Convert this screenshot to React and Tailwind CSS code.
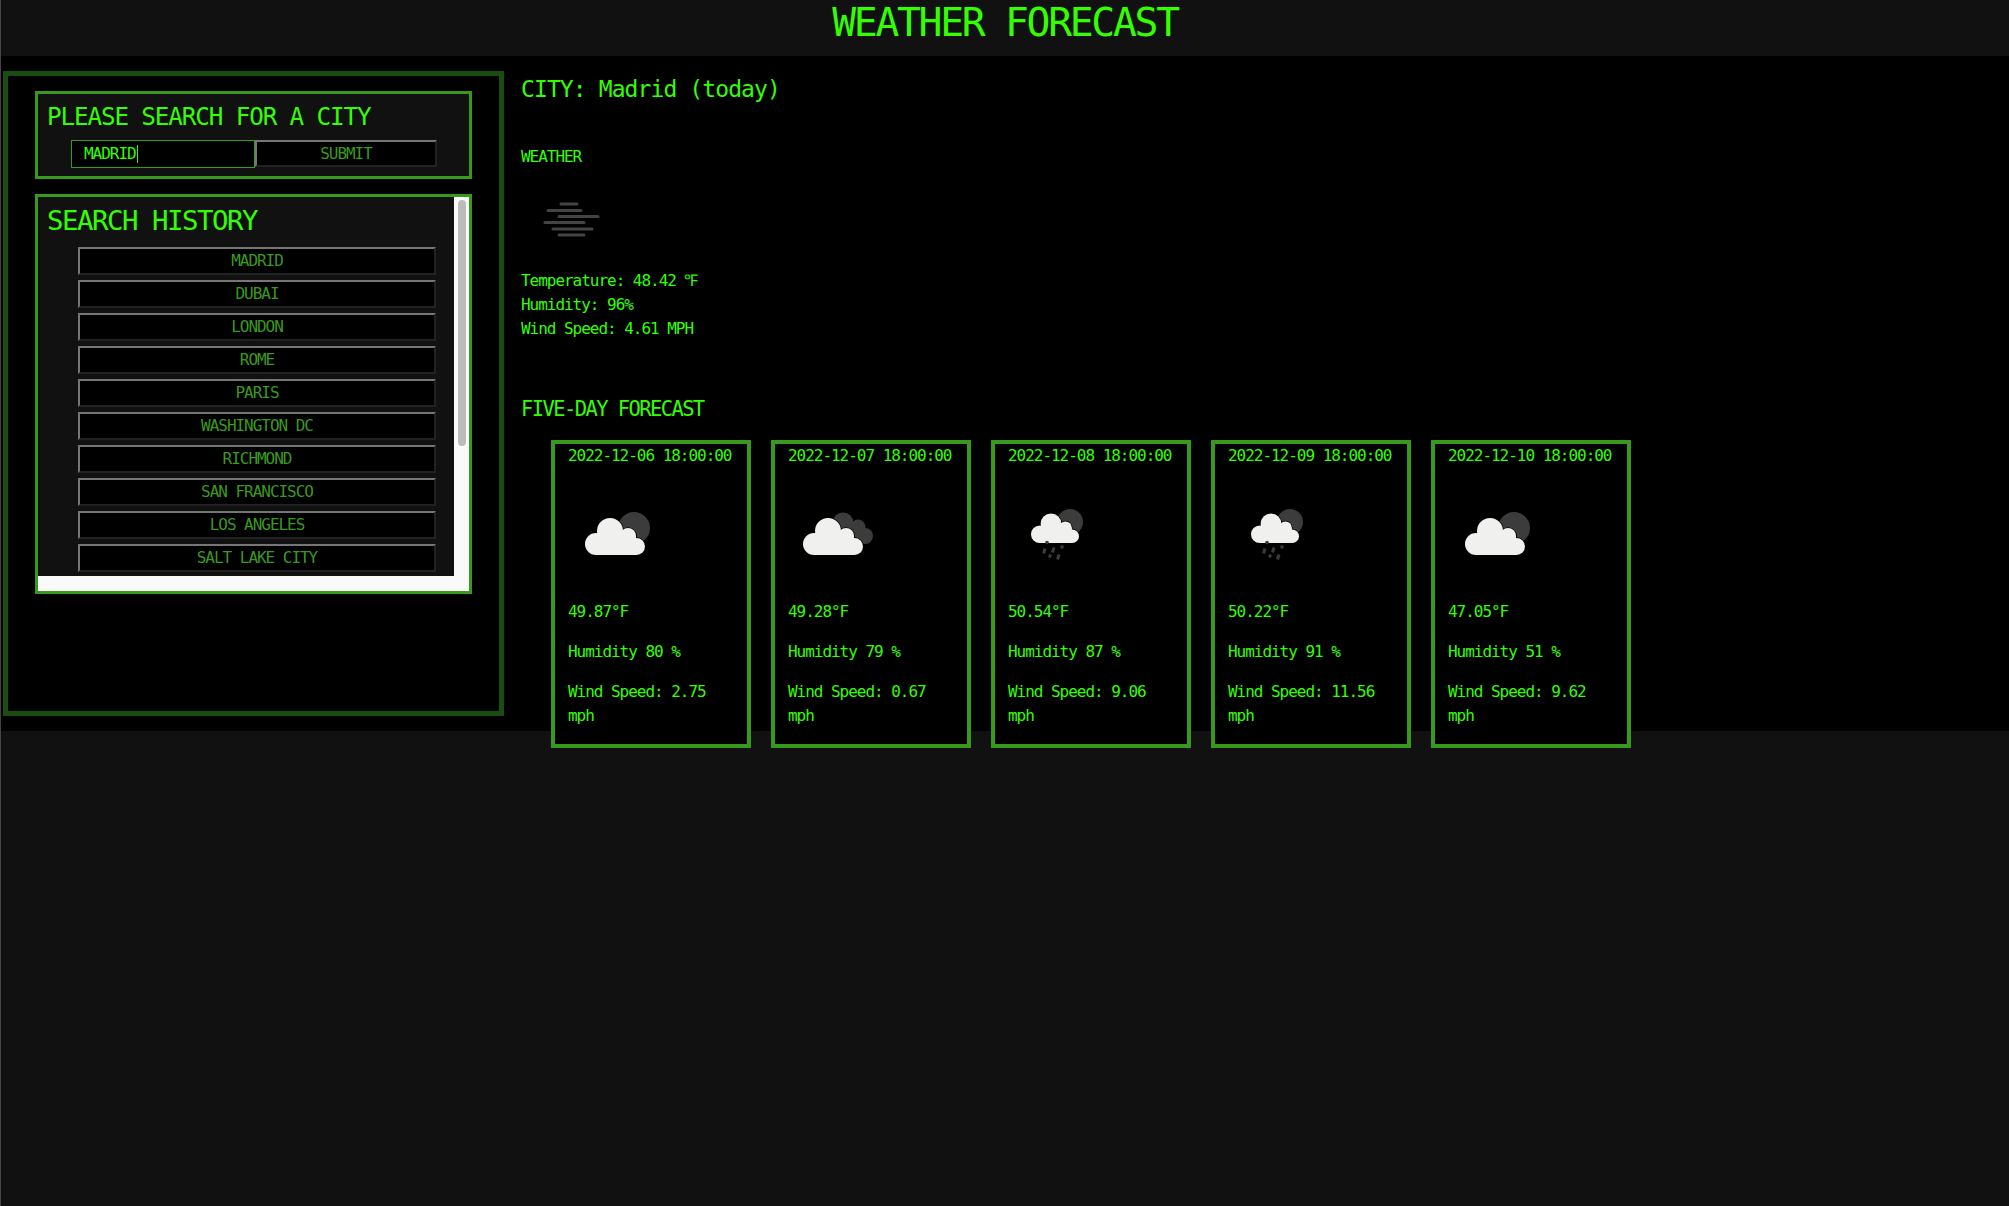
const HISTORY = ['MADRID', 'DUBAI', 'LONDON', 'ROME', 'PARIS', 'WASHINGTON DC', 'RICHMOND', 'SAN FRANCISCO', 'LOS ANGELES', 'SALT LAKE CITY'];

const FORECAST = [
  { date: '2022-12-06 18:00:00', temp: '49.87°F', humidity: '80', wind: '2.75', icon: 'sun' },
  { date: '2022-12-07 18:00:00', temp: '49.28°F', humidity: '79', wind: '0.67', icon: 'clouds' },
  { date: '2022-12-08 18:00:00', temp: '50.54°F', humidity: '87', wind: '9.06', icon: 'rain' },
  { date: '2022-12-09 18:00:00', temp: '50.22°F', humidity: '91', wind: '11.56', icon: 'rain' },
  { date: '2022-12-10 18:00:00', temp: '47.05°F', humidity: '51', wind: '9.62', icon: 'sun' },
];

function CloudShape({ fill, stroke }) {
  const s = stroke ? { stroke, strokeWidth: 1.5 } : {};
  return (
    <g fill={fill} {...s}>
      <circle cx="28" cy="54" r="11" />
      <circle cx="42" cy="41" r="13" />
      <circle cx="60" cy="46" r="8" />
      <circle cx="68.5" cy="56.5" r="8.5" />
      <rect x="28" y="46" width="40" height="19" />
    </g>
  );
}

function Cloud() {
  return (
    <>
      <CloudShape fill="#000" stroke="#000" />
      <CloudShape fill="#f0f0ee" />
    </>
  );
}

function WeatherIcon({ type }) {
  return (
    <svg viewBox="0 0 100 100" className="w-[100px] h-[100px] block">
      {type === 'sun' && (
        <>
          <circle cx="66" cy="38" r="16" fill="#3c3c3c" />
          <Cloud />
        </>
      )}
      {type === 'clouds' && (
        <>
          <g fill="#3c3c3c">
            <circle cx="55" cy="33" r="10.5" />
            <circle cx="70" cy="37" r="7.5" />
            <circle cx="77" cy="46" r="8" />
            <rect x="55" y="33" width="20" height="20" />
          </g>
          <g transform="translate(-2 0)">
            <Cloud />
          </g>
        </>
      )}
      {type === 'rain' && (
        <>
          <circle cx="62" cy="32" r="13" fill="#3c3c3c" />
          <g transform="translate(9.4 1) scale(0.8)">
            <Cloud />
          </g>
          <g stroke="#3c3c3c" strokeWidth="3" strokeLinecap="butt">
            <path d="M37 58.5 L35.5 63.5" />
            <path d="M46 57.5 L44.5 62.5" />
            <path d="M54.5 55.5 L53.5 58.5" />
            <path d="M42.5 64.5 L41.5 67.5" />
            <path d="M51 64.5 L49.5 69.5" />
          </g>
          <circle cx="39" cy="52.5" r="1.8" fill="#3c3c3c" />
        </>
      )}
    </svg>
  );
}

function FogIcon() {
  return (
    <svg viewBox="0 0 70 50" className="w-[70px] h-[50px] block">
      <g stroke="#444" strokeWidth="3" strokeLinecap="round">
        <path d="M22 7 L38 7" />
        <path d="M9 13.5 L42 13.5" />
        <path d="M20 19.5 L59 19.5" />
        <path d="M6 25.5 L45 25.5" />
        <path d="M14 32 L53 32" />
        <path d="M20 38 L45 38" />
      </g>
    </svg>
  );
}

function HistoryButton({ city }) {
  return (
    <button className="h-[28px] w-[358px] shrink-0 bg-black border-2 border-t-[#767676] border-l-[#767676] border-b-[#222] border-r-[#222] text-[#3a991f] text-[16px] tracking-[-1.03px] leading-none">
      {city}
    </button>
  );
}

function ForecastCard({ day }) {
  return (
    <div className="w-[200px] h-[308px] shrink-0 bg-black border-4 border-[#389a1d] pl-[13px] pr-[13px] text-[16px] tracking-[-1.03px] leading-[24.6px] text-[#33ff00]">
      <p className="whitespace-nowrap">{day.date}</p>
      <div className="mt-[21px] mb-[10px]">
        <WeatherIcon type={day.icon} />
      </div>
      <p>{day.temp}</p>
      <p className="mt-[15.4px]">Humidity {day.humidity} %</p>
      <p className="mt-[15.4px]">Wind Speed: {day.wind} mph</p>
    </div>
  );
}

export default function App() {
  return (
    <div className="min-h-screen bg-[#111] border-l border-l-[#444] font-['DejaVu_Sans_Mono',monospace]">
      <header className="h-[56px] flex justify-center pt-[2px]">
        <h1 className="text-[39.7px] leading-[40px] text-[#33ff00] tracking-[-2.3px] whitespace-nowrap">WEATHER FORECAST</h1>
      </header>

      <main className="h-[675px] bg-black flex items-start">
        <aside className="ml-[2px] mt-[15px] w-[501px] h-[645px] shrink-0 border-[5px] border-[#1a4d10] pl-[27px] pt-[15px]">
          <div className="w-[437px] h-[88px] border-[3px] border-[#389a1d] bg-[#111] pl-[9px] pt-[9px]">
            <h2 className="text-[24.3px] leading-[28px] tracking-[-1.15px] text-[#33ff00] whitespace-nowrap">PLEASE SEARCH FOR A CITY</h2>
            <div className="flex ml-[24px] mt-[9px]">
              <div className="w-[184px] h-[28px] bg-black border border-[#389a1d] pl-[12px] flex items-center text-[16px] tracking-[-1.03px] text-[#33ff00]">
                MADRID<span className="w-px h-[18px] bg-[#33ff00] ml-px" />
              </div>
              <button className="w-[182px] h-[27px] bg-black border-2 border-t-[#767676] border-l-[#767676] border-b-[#222] border-r-[#222] text-[#3a991f] text-[16px] tracking-[-1.03px] leading-none">SUBMIT</button>
            </div>
          </div>

          <div className="w-[437px] h-[400px] mt-[15px] border-[3px] border-[#389a1d] flex flex-col">
            <div className="flex-1 flex min-h-0">
              <div className="w-[416px] bg-[#111] overflow-hidden pl-[40px]">
                <h2 className="-ml-[31px] mt-[8px] text-[27.4px] leading-[32px] tracking-[-1.5px] text-[#33ff00] whitespace-nowrap">SEARCH HISTORY</h2>
                <div className="mt-[10px] flex flex-col gap-[5px]">
                  {HISTORY.map(city => <HistoryButton key={city} city={city} />)}
                </div>
              </div>
              <div className="w-[15px] bg-[#fafafa] pl-[3.5px] pt-[3px]">
                <div className="w-[8px] h-[246px] rounded-full bg-[#bbb]" />
              </div>
            </div>
            <div className="h-[15px] bg-[#fafafa]" />
          </div>
        </aside>

        <section className="ml-[17px] text-[#33ff00] text-[16px] tracking-[-1.03px] leading-[24px]">
          <h2 className="mt-[19px] text-[23px] leading-[28px] tracking-[-0.9px] whitespace-nowrap">CITY: Madrid (today)</h2>
          <p className="mt-[42px]">WEATHER</p>
          <div className="mt-[28px] ml-[18px]">
            <FogIcon />
          </div>
          <p className="mt-[22px] whitespace-nowrap">Temperature: 48.42 ℉</p>
          <p>Humidity: 96%</p>
          <p className="whitespace-nowrap">Wind Speed: 4.61 MPH</p>
          <h2 className="mt-[54px] text-[20.5px] leading-[28px] tracking-[-1.6px] whitespace-nowrap">FIVE-DAY FORECAST</h2>
          <div className="flex gap-[20px] ml-[30px] mt-[17px]">
            {FORECAST.map(day => <ForecastCard key={day.date} day={day} />)}
          </div>
        </section>
      </main>
    </div>
  );
}
